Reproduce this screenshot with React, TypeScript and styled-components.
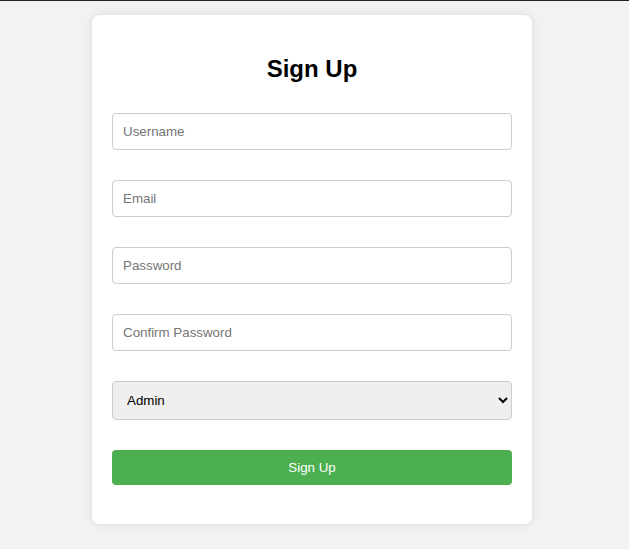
import React from "react";
import styled, { createGlobalStyle } from "styled-components";

const Global = createGlobalStyle`
  html, body { margin: 0; padding: 0; }
  body {
    background: #f2f2f2;
    font-family: "Liberation Sans", Arial, sans-serif;
    border-top: 1px solid #222;
    min-height: 548px;
  }
`;

const Page = styled.div`
  display: flex;
  justify-content: center;
  padding: 14px 5px 0 0;
`;

const Card = styled.div`
  width: 440px;
  box-sizing: border-box;
  background: #fff;
  border-radius: 8px;
  box-shadow: 0 0 10px rgba(0, 0, 0, 0.1);
  padding: 20px;
`;

const Title = styled.h2`
  font-family: "Liberation Sans", Arial, sans-serif;
  font-size: 24px;
  font-weight: bold;
  text-align: center;
  color: #000;
  margin: 19.92px 0;
`;

const Form = styled.form`
  display: flex;
  flex-direction: column;
  gap: 30px;
  padding: 10px 0 19px;
`;

const Input = styled.input`
  width: 100%;
  box-sizing: border-box;
  padding: 10px;
  border: 1px solid #ccc;
  border-radius: 4px;
  font-family: "Liberation Sans", Arial, sans-serif;
  font-size: 13.333px;
  margin: 0;
  &::placeholder { color: #757575; }
`;

const Select = styled.select`
  width: 100%;
  box-sizing: border-box;
  padding: 10px;
  border: 1px solid #ccc;
  border-radius: 4px;
  background-color: #efefef;
  font-family: "Liberation Sans", Arial, sans-serif;
  font-size: 13.333px;
  color: #000;
  margin: 0;
`;

const Button = styled.button`
  width: 100%;
  padding: 10px;
  border: none;
  border-radius: 4px;
  background: #4caf50;
  color: #fff;
  font-family: "Liberation Sans", Arial, sans-serif;
  font-size: 13.333px;
  cursor: pointer;
`;

export default function App() {
  return (
    <>
      <Global />
      <Page>
        <Card>
          <Title>Sign Up</Title>
          <Form onSubmit={(e) => e.preventDefault()}>
            <Input type="text" placeholder="Username" />
            <Input type="email" placeholder="Email" />
            <Input type="password" placeholder="Password" />
            <Input type="password" placeholder="Confirm Password" />
            <Select defaultValue="admin">
              <option value="admin">Admin</option>
              <option value="user">User</option>
            </Select>
            <Button type="submit">Sign Up</Button>
          </Form>
        </Card>
      </Page>
    </>
  );
}
